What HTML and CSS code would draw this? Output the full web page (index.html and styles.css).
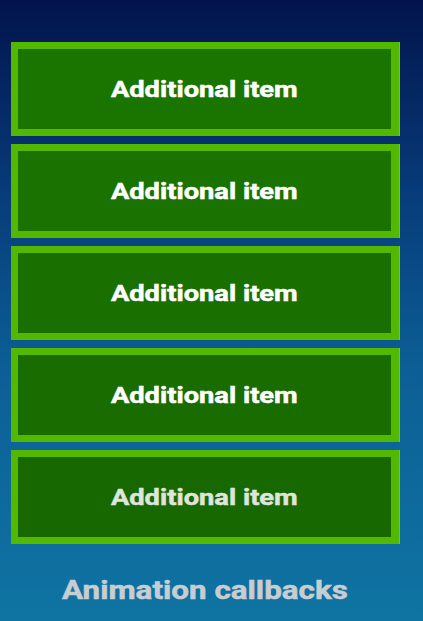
FILE: index.html
```html
<!DOCTYPE html>
<html lang="en">
<head>
<meta charset="utf-8">
<title>Animation callbacks</title>
<link rel="stylesheet" href="styles.css">
</head>
<body>
<main class="screen">
  <ul class="list">
    <li class="item item-1"><span class="label">Additional item</span></li>
    <li class="item item-2"><span class="label">Additional item</span></li>
    <li class="item item-3"><span class="label">Additional item</span></li>
    <li class="item item-4"><span class="label">Additional item</span></li>
    <li class="item item-5"><span class="label">Additional item</span></li>
  </ul>
  <h1 class="title"><span class="title-text">Animation callbacks</span></h1>
</main>
</body>
</html>
```
FILE: styles.css
```css
html, body {
  margin: 0;
  padding: 0;
}
body {
  width: 423px;
  height: 621px;
  overflow: hidden;
  background: linear-gradient(to bottom, #02144c 0%, #073a78 30%, #0c5f96 60%, #0f74a2 100%);
  font-family: Roboto, "Liberation Sans", sans-serif;
}
.screen {
  display: flex;
  flex-direction: column;
  padding: 42px 24px 0 11px;
}
.list {
  list-style: none;
  margin: 0;
  padding: 0;
  display: flex;
  flex-direction: column;
  gap: 8px;
}
.item {
  box-sizing: border-box;
  height: 94px;
  width: 388px;
  border: 7px solid #52b800;
  border-right-width: 8px;
  box-shadow: 1px 0 0 #c0a020;
  background: #1a7500;
  color: #ffffff;
  font-size: 22px;
  font-weight: 700;
  display: flex;
  align-items: center;
  justify-content: center;
}
.label {
  display: inline-block;
  transform: scaleX(1.24);
  -webkit-text-stroke: 0.5px currentColor;
}
.item-2 { background: #1a7300; }
.item-3 { background: #197000; }
.item-4 { background: #186c00; }
.item-5 { background: #176800; color: #dfe4dc; }
.title {
  margin: 32px 0 0;
  text-align: center;
  font-size: 25px;
  font-weight: 700;
  color: #c8cdd2;
  line-height: 30px;
}
.title-text {
  display: inline-block;
  transform: scaleX(1.255);
  -webkit-text-stroke: 0.5px currentColor;
}
```
